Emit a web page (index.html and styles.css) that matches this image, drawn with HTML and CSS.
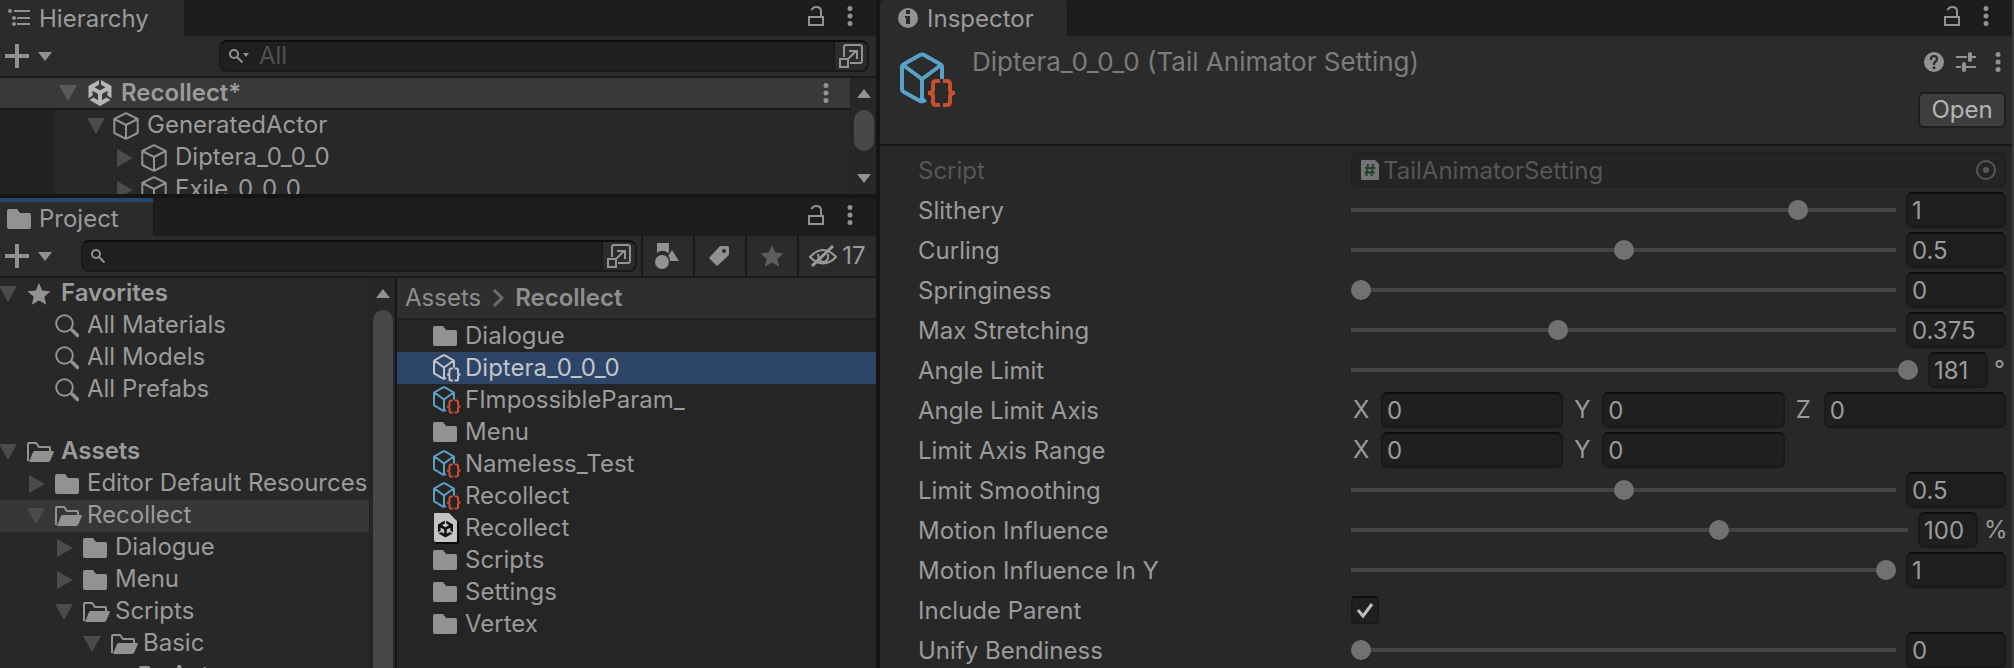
FILE: index.html
```html
<!DOCTYPE html>
<html lang="en">
<head>
<meta charset="utf-8">
<title>Recollect - Editor</title>
<link rel="stylesheet" href="styles.css">
</head>
<body>
<svg class="sprite" aria-hidden="true">
  <symbol id="down" viewBox="0 0 18 16"><path d="M0 0h18L9 16z"/></symbol>
  <symbol id="right" viewBox="0 0 18 18"><path d="M2 0v18l16-9z"/></symbol>
  <symbol id="folder" viewBox="0 0 24 20"><path d="M2 0h8l3 4h9q2 0 2 2v12q0 2-2 2H2q-2 0-2-2V2q0-2 2-2z"/></symbol>
  <symbol id="folder-open" viewBox="0 0 27 20"><path d="M1 19V2q0-1 1-1h7l3 4h10q1 0 1 1v3" fill="none" stroke="currentColor" stroke-width="2"/><path d="M8 9h18q1 0 1 1l-4 9q-1 1-2 1H2L6 10q1-1 2-1z"/></symbol>
  <symbol id="find" viewBox="0 0 24 24"><g fill="none" stroke="currentColor"><circle cx="9.500" cy="9.500" r="8.300" stroke-width="2"/><path d="M17 16l5.500 5.500" stroke-width="3.500" stroke-linecap="round"/></g></symbol>
  <symbol id="glass" viewBox="0 0 14 14"><g fill="none" stroke="currentColor" stroke-width="2"><circle cx="5" cy="5" r="4"/><path d="M8 8l5.500 5.500"/></g></symbol>
  <symbol id="star" viewBox="0 0 24 22"><path d="M12 0l3.200 7.500 8.300.8-6.200 5.500 1.900 8L12 17.600 4.800 21.800l1.900-8L.5 8.300l8.300-.8z"/></symbol>
  <symbol id="cube" viewBox="0 0 26 28"><path d="M13 1.200L24.700 7v14L13 26.800 1.300 21V7zM1.300 7L13 13 24.700 7M13 13v13.500" fill="none" stroke="currentColor" stroke-width="2" stroke-linejoin="round"/></symbol>
  <symbol id="asset" viewBox="0 0 56 56"><path class="asset-cube" d="M42 27V15q0-2-2-3L24 3q-2-1-4 0L4 12q-2 1-2 3v22q0 2 2 3l16 9q2 1 6-1M3 13l19 14 19-14M22 27v23"/><path class="asset-brace" d="M40 29h-4q-3 0-3 3v6q0 3-5 3q5 0 5 3v6q0 3 3 3h4M43 29h4q3 0 3 3v6q0 3 5 3q-5 0-5 3v6q0 3-3 3h-4"/></symbol>
  <symbol id="unity" viewBox="0 0 24 24"><path d="m12.929 4.294 3.800 2.193c.137.077.142.290 0 .367l-4.515 2.608a.419.419 0 0 1-.425 0L7.274 6.854c-.139-.074-.142-.293 0-.367l3.797-2.193V0L1.376 5.598V16.793l3.718-2.146v-4.386c-.003-.156.181-.268.318-.184l4.515 2.608a.425.425 0 0 1 .214.368v5.213c.002.156-.181.268-.318.184l-3.800-2.193-3.718 2.146L12 24l9.695-5.598-3.718-2.146-3.800 2.193c-.134.082-.323-.025-.318-.184V13.053c0-.156.087-.296.214-.368l4.515-2.608c.134-.082.323.022.318.184v4.386l3.718 2.146V5.598L12.929 0z"/></symbol>
  <symbol id="scene" viewBox="0 0 26 32"><path d="M4 3h14l8 8v20q0 1-1 1H3z" fill="#080808"/><path d="M2 1h14l8 8v20q0 1-1 1H3q-2 0-2-2V2q0-1 1-1z" fill="#c4c4c4"/><svg x="4" y="8" width="17" height="18" viewBox="0 0 24 24"><use href="#unity" fill="#111"/></svg></symbol>
  <symbol id="dots" viewBox="0 0 6 20"><circle cx="3" cy="2.500" r="2.500"/><circle cx="3" cy="10" r="2.500"/><circle cx="3" cy="17.500" r="2.500"/></symbol>
  <symbol id="lock" viewBox="0 0 16 20"><path d="M1 11h14v8H1zM13 11V5q0-4-5-4-3 0-4.500 3" fill="none" stroke="currentColor" stroke-width="2"/></symbol>
  <symbol id="plus" viewBox="0 0 24 24"><path d="M10 0h4v10h10v4H14v10h-4V14H0v-4h10z"/></symbol>
  <symbol id="caret" viewBox="0 0 14 9"><path d="M0 0h14L7 9z"/></symbol>
  <symbol id="caret-up" viewBox="0 0 14 9"><path d="M0 9h14L7 0z"/></symbol>
  <symbol id="popout" viewBox="0 0 24 24"><path d="M5 13V3q0-2 2-2h14q2 0 2 2v14q0 2-2 2H11M1 15h8v8H1zM9 15l8-8M10 7h8v8" fill="none" stroke="currentColor" stroke-width="2"/></symbol>
  <symbol id="hierarchy" viewBox="0 0 22 18"><path d="M6 2h16M9 9h13M9 15h13" stroke="currentColor" stroke-width="2"/><circle cx="2" cy="2" r="2"/><circle cx="6" cy="9" r="2"/><circle cx="6" cy="15" r="2"/></symbol>
  <symbol id="info" viewBox="0 0 20 20"><path fill-rule="evenodd" d="M10 0a10 10 0 1 1 0 20 10 10 0 0 1 0-20zM8 2h4v4H8zM7 8h5v8H8v-6H7z"/></symbol>
  <symbol id="help" viewBox="0 0 20 20"><circle cx="10" cy="10" r="10"/><path d="M7 8V7q0-3 3-3t3 3q0 1.500-1.500 2.500T10 12v1" fill="none" stroke="#2b2b2b" stroke-width="2.200"/><circle cx="10" cy="15.800" r="1.500" fill="#2b2b2b"/></symbol>
  <symbol id="preset" viewBox="0 0 20 20"><path d="M0 5h11M16 5h4M0 15h5M10 15h10" stroke="currentColor" stroke-width="2"/><rect x="12" y="0" width="4" height="10" rx="2"/><rect x="6" y="10" width="4" height="10" rx="2"/></symbol>
  <symbol id="shapes" viewBox="0 0 24 26"><path d="M2 0h12v9l-1 1a8 8 0 0 0-11 0zM17 7l7 11h-9q0-4-2-5z"/><circle cx="7" cy="19" r="7"/></symbol>
  <symbol id="tag" viewBox="0 0 20 20"><path fill-rule="evenodd" d="M11 0h7q2 0 2 2v7L8 20 0 12zM15 3a2 2 0 1 0 0 4 2 2 0 0 0 0-4z"/></symbol>
  <symbol id="eye" viewBox="0 0 28 22"><g fill="none" stroke="currentColor" stroke-width="2"><path d="M1 12Q14-2 27 12 14 25 1 12z"/><path d="M9 9q0 8 6 8 5-1 4-8"/><path d="M3 21L24 1" stroke-width="3"/></g></symbol>
  <symbol id="hash" viewBox="0 0 18 20"><path d="M1 0h13l4 4v15q0 1-1 1H1q-1 0-1-1V1q0-1 1-1z" fill="#747474"/><path d="M7 4L5.500 16M12 4l-1.500 12M4 8h10.500M3.500 12.500H14" stroke="#1f4426" stroke-width="2" fill="none"/></symbol>
  <symbol id="target" viewBox="0 0 20 20"><circle cx="10" cy="10" r="9" fill="none" stroke="currentColor" stroke-width="2"/><circle cx="10" cy="10" r="3"/></symbol>
  <symbol id="chevron" viewBox="0 0 12 18"><path d="M2 1l8 8-8 8" fill="none" stroke="currentColor" stroke-width="3"/></symbol>
</svg>

<main class="editor">
  <div class="left">
    <section class="panel" aria-label="Hierarchy">
      <header class="tabs">
        <h2 class="tab tab-hierarchy"><svg width="22" height="18"><use href="#hierarchy"/></svg><span>Hierarchy</span></h2>
        <div class="tab-tools">
          <button aria-label="Lock"><svg width="16" height="20"><use href="#lock"/></svg></button>
          <button aria-label="Menu"><svg width="6" height="20"><use href="#dots"/></svg></button>
        </div>
      </header>
      <div class="toolbar">
        <button class="add" aria-label="Create"><svg width="24" height="24"><use href="#plus"/></svg><svg width="14" height="9"><use href="#caret"/></svg></button>
        <div class="search search-hierarchy">
          <svg width="14" height="14"><use href="#glass"/></svg><svg class="mini" width="6" height="4"><use href="#caret"/></svg>
          <input type="text" placeholder="All" aria-label="Search hierarchy">
          <button aria-label="Open search"><svg width="24" height="24"><use href="#popout"/></svg></button>
        </div>
      </div>
      <div class="scroller">
        <div class="scene-tree">
          <div class="row scene-row"><svg class="twist" width="18" height="16"><use href="#down"/></svg><span class="slot slot-wide"><svg class="bright" width="26" height="26"><use href="#unity"/></svg></span><b class="name">Recollect*</b><button class="row-menu" aria-label="Scene menu"><svg width="6" height="20"><use href="#dots"/></svg></button></div>
          <ul class="objects">
            <li class="row level-1"><svg class="twist" width="18" height="16"><use href="#down"/></svg><span class="slot slot-wide"><svg width="26" height="28"><use href="#cube"/></svg></span><span class="name">GeneratedActor</span></li>
            <li class="row level-2"><svg class="twist" width="18" height="18"><use href="#right"/></svg><span class="slot slot-wide"><svg width="26" height="28"><use href="#cube"/></svg></span><span class="name">Diptera_0_0_0</span></li>
            <li class="row level-2"><svg class="twist" width="18" height="18"><use href="#right"/></svg><span class="slot slot-wide"><svg width="26" height="28"><use href="#cube"/></svg></span><span class="name">Exile_0_0_0</span></li>
          </ul>
        </div>
        <div class="scrollbar"><svg width="14" height="9"><use href="#caret-up"/></svg><span class="thumb thumb-short"></span><svg width="14" height="9"><use href="#caret"/></svg></div>
      </div>
    </section>

    <section class="panel" aria-label="Project">
      <header class="tabs">
        <h2 class="tab tab-project"><svg width="24" height="20"><use href="#folder"/></svg>Project</h2>
        <div class="tab-tools">
          <button aria-label="Lock"><svg width="16" height="20"><use href="#lock"/></svg></button>
          <button aria-label="Menu"><svg width="6" height="20"><use href="#dots"/></svg></button>
        </div>
      </header>
      <div class="toolbar toolbar-project">
        <button class="add" aria-label="Create"><svg width="24" height="24"><use href="#plus"/></svg><svg width="14" height="9"><use href="#caret"/></svg></button>
        <div class="search search-project">
          <svg width="14" height="14"><use href="#glass"/></svg>
          <input type="text" aria-label="Search project">
          <button aria-label="Open search"><svg width="24" height="24"><use href="#popout"/></svg></button>
        </div>
        <div class="filters">
          <button aria-label="Search by type"><svg width="24" height="26"><use href="#shapes"/></svg></button>
          <button aria-label="Search by label"><svg width="20" height="20"><use href="#tag"/></svg></button>
          <button class="dim" aria-label="Save search"><svg width="24" height="22"><use href="#star"/></svg></button>
          <button class="hidden-count" aria-label="Hidden packages, 17"><svg width="28" height="22"><use href="#eye"/></svg>17</button>
        </div>
      </div>
      <div class="browser">
        <div class="scroller">
          <div class="folders">
            <ul>
              <li class="row root"><svg class="twist" width="18" height="16"><use href="#down"/></svg><span class="slot slot-wide"><svg width="24" height="22"><use href="#star"/></svg></span><b class="name">Favorites</b></li>
              <li class="row leaf"><span class="slot"><svg width="24" height="24"><use href="#find"/></svg></span><span class="name">All Materials</span></li>
              <li class="row leaf"><span class="slot"><svg width="24" height="24"><use href="#find"/></svg></span><span class="name">All Models</span></li>
              <li class="row leaf"><span class="slot"><svg width="24" height="24"><use href="#find"/></svg></span><span class="name">All Prefabs</span></li>
            </ul>
            <ul>
              <li class="row root"><svg class="twist" width="18" height="16"><use href="#down"/></svg><span class="slot slot-wide"><svg width="27" height="20"><use href="#folder-open"/></svg></span><b class="name">Assets</b></li>
              <li class="row depth-1"><svg class="twist" width="18" height="18"><use href="#right"/></svg><span class="slot"><svg width="24" height="20"><use href="#folder"/></svg></span><span class="name">Editor Default Resources</span></li>
              <li class="row depth-1 current"><svg class="twist" width="18" height="16"><use href="#down"/></svg><span class="slot"><svg width="27" height="20"><use href="#folder-open"/></svg></span><span class="name">Recollect</span></li>
              <li class="row depth-2"><svg class="twist" width="18" height="18"><use href="#right"/></svg><span class="slot"><svg width="24" height="20"><use href="#folder"/></svg></span><span class="name">Dialogue</span></li>
              <li class="row depth-2"><svg class="twist" width="18" height="18"><use href="#right"/></svg><span class="slot"><svg width="24" height="20"><use href="#folder"/></svg></span><span class="name">Menu</span></li>
              <li class="row depth-2"><svg class="twist" width="18" height="16"><use href="#down"/></svg><span class="slot"><svg width="27" height="20"><use href="#folder-open"/></svg></span><span class="name">Scripts</span></li>
              <li class="row depth-3"><svg class="twist" width="18" height="16"><use href="#down"/></svg><span class="slot"><svg width="27" height="20"><use href="#folder-open"/></svg></span><span class="name">Basic</span></li>
              <li class="row depth-4"><span class="slot"><svg width="24" height="20"><use href="#folder"/></svg></span><span class="name">Actor</span></li>
            </ul>
          </div>
          <div class="scrollbar"><svg width="14" height="9"><use href="#caret-up"/></svg><span class="thumb thumb-long"></span></div>
        </div>
        <div class="contents">
          <nav class="crumbs" aria-label="Path"><a href="#assets">Assets</a><svg width="12" height="18"><use href="#chevron"/></svg><b>Recollect</b></nav>
          <ul class="files">
            <li class="row"><span class="slot"><svg width="24" height="20"><use href="#folder"/></svg></span><span class="name">Dialogue</span></li>
            <li class="row selected"><span class="slot"><svg width="28" height="28"><use href="#asset"/></svg></span><span class="name">Diptera_0_0_0</span></li>
            <li class="row"><span class="slot"><svg width="28" height="28"><use href="#asset"/></svg></span><span class="name">FImpossibleParam_</span></li>
            <li class="row"><span class="slot"><svg width="24" height="20"><use href="#folder"/></svg></span><span class="name">Menu</span></li>
            <li class="row"><span class="slot"><svg width="28" height="28"><use href="#asset"/></svg></span><span class="name">Nameless_Test</span></li>
            <li class="row"><span class="slot"><svg width="28" height="28"><use href="#asset"/></svg></span><span class="name">Recollect</span></li>
            <li class="row"><span class="slot"><svg width="26" height="32"><use href="#scene"/></svg></span><span class="name">Recollect</span></li>
            <li class="row"><span class="slot"><svg width="24" height="20"><use href="#folder"/></svg></span><span class="name">Scripts</span></li>
            <li class="row"><span class="slot"><svg width="24" height="20"><use href="#folder"/></svg></span><span class="name">Settings</span></li>
            <li class="row"><span class="slot"><svg width="24" height="20"><use href="#folder"/></svg></span><span class="name">Vertex</span></li>
          </ul>
        </div>
      </div>
    </section>
  </div>

  <section class="panel inspector" aria-label="Inspector">
    <header class="tabs">
      <h2 class="tab tab-inspector"><svg width="20" height="20"><use href="#info"/></svg><span>Inspector</span></h2>
      <div class="tab-tools">
        <button aria-label="Lock"><svg width="16" height="20"><use href="#lock"/></svg></button>
        <button aria-label="Menu"><svg width="6" height="20"><use href="#dots"/></svg></button>
      </div>
    </header>
    <div class="object-head">
      <svg class="object-icon" width="56" height="56"><use href="#asset"/></svg>
      <h1>Diptera_0_0_0 (Tail Animator Setting)</h1>
      <div class="head-side">
        <div class="head-icons">
          <button aria-label="Help"><svg width="20" height="20"><use href="#help"/></svg></button>
          <button aria-label="Presets"><svg width="20" height="20"><use href="#preset"/></svg></button>
          <button aria-label="Menu"><svg width="6" height="20"><use href="#dots"/></svg></button>
        </div>
        <button class="open">Open</button>
      </div>
    </div>
    <form class="props">
      <div class="prop off"><label for="script">Script</label><div class="object-field"><svg width="18" height="20"><use href="#hash"/></svg><input id="script" type="text" value="TailAnimatorSetting" disabled><button type="button" disabled aria-label="Select object"><svg width="20" height="20"><use href="#target"/></svg></button></div></div>
      <div class="prop"><label for="slithery">Slithery</label><div class="slide"><input id="slithery" type="range" min="0" max="1.2" step="any" value="1"><input class="num" type="text" value="1" aria-label="Slithery value"></div></div>
      <div class="prop"><label for="curling">Curling</label><div class="slide"><input id="curling" type="range" min="0" max="1" step="any" value="0.5"><input class="num" type="text" value="0.5" aria-label="Curling value"></div></div>
      <div class="prop"><label for="spring">Springiness</label><div class="slide"><input id="spring" type="range" min="0" max="1" step="any" value="0"><input class="num" type="text" value="0" aria-label="Springiness value"></div></div>
      <div class="prop"><label for="stretch">Max Stretching</label><div class="slide"><input id="stretch" type="range" min="0" max="1" step="any" value="0.375"><input class="num" type="text" value="0.375" aria-label="Max Stretching value"></div></div>
      <div class="prop"><label for="angle">Angle Limit</label><div class="slide"><input id="angle" type="range" min="1" max="181" value="181"><input class="num num-short" type="text" value="181" aria-label="Angle Limit value"><span class="unit unit-degree">°</span></div></div>
      <div class="prop"><label for="axis-x">Angle Limit Axis</label><div class="vector"><label>X<input id="axis-x" type="text" value="0"></label><label>Y<input type="text" value="0"></label><label>Z<input type="text" value="0"></label></div></div>
      <div class="prop"><label for="range-x">Limit Axis Range</label><div class="vector"><label>X<input id="range-x" type="text" value="0"></label><label>Y<input type="text" value="0"></label></div></div>
      <div class="prop"><label for="smooth">Limit Smoothing</label><div class="slide"><input id="smooth" type="range" min="0" max="1" step="any" value="0.5"><input class="num" type="text" value="0.5" aria-label="Limit Smoothing value"></div></div>
      <div class="prop"><label for="motion">Motion Influence</label><div class="slide"><input id="motion" type="range" min="0" max="150" value="100"><input class="num num-short" type="text" value="100" aria-label="Motion Influence value"><span class="unit">%</span></div></div>
      <div class="prop"><label for="motion-y">Motion Influence In Y</label><div class="slide"><input id="motion-y" type="range" min="0" max="1" step="any" value="1"><input class="num" type="text" value="1" aria-label="Motion Influence In Y value"></div></div>
      <div class="prop"><label for="parent">Include Parent</label><div class="check"><input id="parent" type="checkbox" checked><svg width="18" height="18" viewBox="0 0 18 18"><path d="M2 9l5 6 9-12" fill="none" stroke="currentColor" stroke-width="3"/></svg></div></div>
      <div class="prop"><label for="unify">Unify Bendiness</label><div class="slide"><input id="unify" type="range" min="0" max="1" step="any" value="0"><input class="num" type="text" value="0" aria-label="Unify Bendiness value"></div></div>
    </form>
  </section>
</main>
</body>
</html>
```

FILE: styles.css
```css
:root {
  --edge: #151515;
  --line: #1a1a1a;
  --panel: #282828;
  --bar: #2b2b2b;
  --text: #9b9b9b;
  --icon: #929292;
  --field: #1f1f1f;
  --cube: #58a1c8;
  --brace: #cb4f2c;
}

* { box-sizing: border-box; }

body {
  margin: 0;
  background: var(--edge);
  color: var(--text);
  font: 24px/32px Inter, "Liberation Sans", sans-serif;
}

svg {
  display: block;
  flex: none;
  fill: currentColor;
  overflow: visible;
}

.sprite {
  position: absolute;
  width: 0;
  height: 0;
}

h1, h2, ul {
  margin: 0;
  padding: 0;
  font-size: 24px;
  font-weight: 400;
  list-style: none;
}

b { font-weight: 600; }

button, input {
  margin: 0;
  padding: 0;
  border: 0;
  background: none;
  color: inherit;
  font: inherit;
}

input { min-width: 0; outline: 0; }

a { color: inherit; text-decoration: none; }

.editor {
  display: grid;
  grid-template-columns: 876fr 1134fr;
  gap: 4px;
  height: 100vh;
  overflow: hidden;
}

.left {
  display: grid;
  grid-template-rows: 194fr 470fr;
  gap: 4px;
  min-width: 0;
  min-height: 0;
}

.panel {
  display: flex;
  flex-direction: column;
  min-width: 0;
  min-height: 0;
  overflow: hidden;
  background: var(--panel);
}

/* Tabs */
.tabs {
  display: flex;
  flex: none;
  justify-content: space-between;
  background: #1d1d1d;
}

.tab {
  display: flex;
  align-items: center;
  height: 36px;
  border-right: 1px solid var(--line);
  background: var(--bar);
}

.tab svg { color: var(--icon); }

.tab span { padding-top: 2px; }

.tab-hierarchy { gap: 9px; padding: 0 35px 0 8px; }

.tab-project {
  gap: 8px;
  height: 38px;
  padding: 0 34px 0 7px;
  border-top: 4px solid #24476d;
  border-radius: 0 4px 0 0;
}

.tab-inspector {
  gap: 9px;
  padding: 0 33px 0 18px;
  border-radius: 4px 4px 0 0;
}

.tab-tools {
  display: flex;
  align-items: center;
  gap: 23px;
  padding: 0 23px 4px 0;
  color: var(--icon);
}

/* Toolbars */
.toolbar {
  display: flex;
  flex: none;
  align-items: center;
  height: 42px;
  padding: 0 7px 0 5px;
  border-bottom: 2px solid var(--line);
  background: var(--bar);
}

.toolbar-project { padding-right: 0; }

.add {
  display: flex;
  align-items: center;
  gap: 9px;
  color: var(--icon);
}

.search {
  display: flex;
  flex: 1;
  align-items: center;
  height: 32px;
  padding-left: 8px;
  border: 2px solid var(--line);
  border-top-color: #0e0e0e;
  border-radius: 8px;
  background: var(--field);
  color: var(--icon);
}

.search-hierarchy { margin-left: 167px; }

.search-project { margin: 0 4px 0 29px; }

.search .mini { margin-top: -3px; }

.search input {
  flex: 1;
  margin-left: 10px;
}

.search input::placeholder { color: #505050; opacity: 1; }

.search button {
  align-self: stretch;
  display: flex;
  align-items: center;
  padding: 0 4px;
  border-left: 2px solid var(--line);
  border-radius: 0 6px 6px 0;
  background: var(--bar);
}

.filters {
  display: flex;
  align-self: stretch;
  color: var(--icon);
}

.filters button {
  display: flex;
  align-items: center;
  justify-content: center;
  width: 52px;
  padding-right: 2px;
  border-left: 2px solid var(--line);
}

.filters .dim { padding-right: 0; color: #5c5c5c; }

.filters .hidden-count {
  gap: 5px;
  width: 79px;
  padding-right: 0;
  color: var(--text);
}

/* Rows */
.row {
  display: flex;
  align-items: center;
  height: 32px;
  white-space: nowrap;
}

.name { padding: 0 0 2px 1px; }

.scene-row .name, .files .name { padding-bottom: 0; }

.twist {
  margin: 0 10px 0 -1px;
  color: #4b4b4b;
}

.slot {
  width: 31px;
  flex: none;
  color: var(--icon);
}

.slot-wide { width: 33px; }

.slot .bright { color: #b6b6b6; }

.scroller {
  display: flex;
  flex: 1;
  min-width: 0;
  min-height: 0;
}

.scene-tree, .folders {
  flex: 1;
  min-width: 0;
  overflow: hidden;
}

.scene-row {
  padding: 0 21px 0 60px;
  border-bottom: 2px solid var(--line);
  background: #393939;
}

.scene-row .twist { color: #595959; }

.row-menu { margin-left: auto; color: var(--icon); }

.objects { border-left: 55px solid #222; }

.level-1 { padding-left: 32px; }
.level-2 { padding-left: 60px; }

.objects .twist { margin: 0 8px 0 0; }

.scrollbar {
  display: flex;
  flex: none;
  flex-direction: column;
  align-items: center;
  width: 26px;
  padding: 11px 0;
  border-left: 1px solid #222;
  background: #272727;
  color: var(--icon);
}

.thumb {
  width: 20px;
  margin-top: 12px;
  border-radius: 10px;
  background: #484848;
}

.thumb-short { height: 41px; margin-bottom: 23px; }

.thumb-long { height: 100%; margin-bottom: -20px; }

/* Project browser */
.browser {
  display: grid;
  grid-template-columns: 397fr 479fr;
  flex: 1;
  min-height: 0;
}

.browser .scroller { border-right: 2px solid var(--edge); }

.folders ul + ul { margin-top: 30px; }

.leaf { padding-left: 55px; }
.depth-1 { padding-left: 28px; }
.depth-2 { padding-left: 56px; }
.depth-3 { padding-left: 84px; }
.depth-4 { padding-left: 139px; }

.current { background: #373737; }

.contents { min-width: 0; background: #252525; }

.crumbs {
  display: flex;
  align-items: center;
  gap: 11px;
  height: 42px;
  padding: 0 8px;
  border-bottom: 2px solid #202020;
  background: #2e2e2e;
  color: #8e8e8e;
}

.crumbs svg { color: #6b6b6b; }

.files .row { padding-left: 36px; }

.files .selected {
  --cube: #c4c4c4;
  --brace: #c4c4c4;
  background: #2c4569;
  color: #c4c4c4;
}

.asset-cube, .asset-brace {
  fill: none;
  stroke: var(--cube);
  stroke-width: 4px;
}

.asset-brace { stroke: var(--brace); }

/* Inspector */
.inspector { border-right: 2px solid #3d3d3d; }

.object-head {
  display: flex;
  align-items: flex-start;
  flex: none;
  padding: 16px 6px 16px 20px;
  border-bottom: 2px solid var(--edge);
  background: var(--bar);
}

.object-head h1 {
  flex: 1;
  margin-left: 16px;
  color: #7c7c7c;
  font-size: 26px;
  font-optical-sizing: none;
  line-height: 20px;
}

.head-side {
  display: flex;
  flex-direction: column;
  align-items: flex-end;
  gap: 20px;
}

.head-icons {
  display: flex;
  gap: 12px;
  padding-right: 5px;
  color: var(--icon);
}

.head-icons button:last-child { margin-left: 7px; }

.open {
  width: 88px;
  height: 36px;
  border: 2px solid #1e1e1e;
  border-radius: 6px;
  background: #3e3e3e;
  color: #b4b4b4;
}

.props {
  display: flex;
  flex-direction: column;
  gap: 4px;
  padding: 6px 6px 0 38px;
}

.prop {
  display: grid;
  grid-template-columns: 433fr 655fr;
  align-items: center;
  height: 36px;
  flex: none;
}

.prop > label { padding-top: 2px; }

.off { color: #565656; }

.object-field, .num, .vector input {
  height: 36px;
  border: 2px solid var(--line);
  border-radius: 6px;
}

.object-field {
  display: flex;
  align-items: center;
  gap: 4px;
  padding: 0 8px;
  border-color: #212121;
  background: #242424;
}

.object-field input { flex: 1; padding-top: 2px; }

.num, .vector input {
  padding: 0 4px;
  border-top-color: #0e0e0e;
  background: var(--field);
}

.slide { display: flex; align-items: center; }

.num { width: 100px; }

.num-short { width: 60px; }

.unit { width: 28px; padding-left: 6px; }

.unit-degree { width: 18px; }

input[type="range"] {
  flex: 1;
  height: 20px;
  margin-right: 10px;
  appearance: none;
}

input[type="range"]::-webkit-slider-runnable-track {
  height: 4px;
  background: #434343;
}

input[type="range"]::-webkit-slider-thumb {
  width: 20px;
  height: 20px;
  margin-top: -8px;
  border-radius: 50%;
  background: #717171;
  appearance: none;
}

.vector {
  display: grid;
  grid-template-columns: repeat(3, 1fr);
  gap: 9px;
}

.vector label {
  display: grid;
  grid-template-columns: 28px 1fr;
  align-items: center;
  padding-left: 2px;
}

.check { display: grid; justify-items: start; color: #bdbdbd; }

.check input, .check svg { grid-area: 1 / 1; }

.check svg { margin: 5px; pointer-events: none; }

.check input {
  width: 28px;
  height: 28px;
  border: 2px solid var(--line);
  border-top-color: #0e0e0e;
  border-radius: 4px;
  background: var(--field);
  appearance: none;
}
```
